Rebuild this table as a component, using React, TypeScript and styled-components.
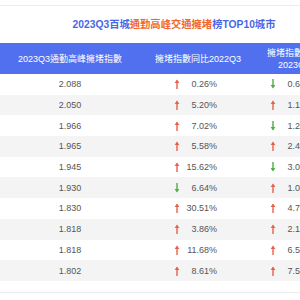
import styled, { createGlobalStyle } from 'styled-components';

const GlobalStyle = createGlobalStyle`
  html, body {
    margin: 0;
    padding: 0;
    background: #fff;
    overflow: hidden;
  }

  body {
    font-family: 'Liberation Sans', 'Noto Sans CJK TC', sans-serif;
  }
`;

const Page = styled.div`
  width: 348px;
`;

const TopRule = styled.div`
  height: 5px;
  border-bottom: 1px solid #ececec;
`;

const Title = styled.h2`
  margin: 0;
  height: 37px;
  line-height: 37px;
  text-align: center;
  font-size: 10.3px;
  font-weight: 700;
  color: #4866e8;

  .hot {
    color: #f2672c;
  }
`;

const Grid = styled.div`
  width: 332px;
  border-bottom: 1px solid #ececec;
  padding-bottom: 11px;
`;

const HeadRow = styled.div`
  display: grid;
  grid-template-columns: 140px 116px 76px;
  height: 31px;
  align-items: center;
  background: #5070f0;
`;

const HeadCell = styled.div`
  padding: 0 6px;
  text-align: center;
  font-size: 9px;
  line-height: 12px;
  color: #fff;
`;

const Row = styled.div<{ $striped: boolean }>`
  display: grid;
  grid-template-columns: 140px 116px 76px;
  height: 20.7px;
  align-items: center;
  background: ${({ $striped }) => ($striped ? '#f4f4f4' : '#fff')};
`;

const Cell = styled.div`
  text-align: center;
  font-size: 9px;
  color: #555;
`;

const ChangeCell = styled.div`
  display: flex;
  justify-content: center;
  align-items: center;
  gap: 5px;
  padding-right: 5px;
  font-size: 9px;
  color: #555;
`;

const Value = styled.span`
  width: 32px;
  text-align: right;
`;

const Arrow = ({ up }: { up: boolean }) => {
  const color = up ? '#e8604c' : '#4fae44';
  return (
    <svg width="6" height="10" viewBox="0 0 6 10" style={{ flex: 'none' }}>
      {up ? (
        <>
          <path d="M3 1.5 V10" stroke={color} strokeWidth="1.4" />
          <path d="M0.6 4 L3 0.4 L5.4 4 Z" fill={color} />
        </>
      ) : (
        <>
          <path d="M3 0 V8.5" stroke={color} strokeWidth="1.4" />
          <path d="M0.6 6 L3 9.6 L5.4 6 Z" fill={color} />
        </>
      )}
    </svg>
  );
};

const rows = [
  { index: '2.088', yoy: '0.26%', yoyUp: true, qoq: '0.63%', qoqUp: false },
  { index: '2.050', yoy: '5.20%', yoyUp: true, qoq: '1.13%', qoqUp: true },
  { index: '1.966', yoy: '7.02%', yoyUp: true, qoq: '1.25%', qoqUp: false },
  { index: '1.965', yoy: '5.58%', yoyUp: true, qoq: '2.47%', qoqUp: true },
  { index: '1.945', yoy: '15.62%', yoyUp: true, qoq: '3.04%', qoqUp: false },
  { index: '1.930', yoy: '6.64%', yoyUp: false, qoq: '1.02%', qoqUp: true },
  { index: '1.830', yoy: '30.51%', yoyUp: true, qoq: '4.71%', qoqUp: true },
  { index: '1.818', yoy: '3.86%', yoyUp: true, qoq: '2.16%', qoqUp: true },
  { index: '1.818', yoy: '11.68%', yoyUp: true, qoq: '6.52%', qoqUp: true },
  { index: '1.802', yoy: '8.61%', yoyUp: true, qoq: '7.54%', qoqUp: true },
];

const App = () => {
  return (
    <Page>
      <GlobalStyle />
      <TopRule />
      <Title>
        2023Q3百城<span className="hot">通勤高峰交通擁堵</span>榜TOP10城市
      </Title>
      <Grid>
        <HeadRow>
          <HeadCell>2023Q3通勤高峰擁堵指數</HeadCell>
          <HeadCell>擁堵指數同比2022Q3</HeadCell>
          <HeadCell>擁堵指數環比2023Q2</HeadCell>
        </HeadRow>
        {rows.map((row, i) => (
          <Row key={i} $striped={i % 2 === 1}>
            <Cell>{row.index}</Cell>
            <ChangeCell>
              <Arrow up={row.yoyUp} />
              <Value>{row.yoy}</Value>
            </ChangeCell>
            <ChangeCell>
              <Arrow up={row.qoqUp} />
              <Value>{row.qoq}</Value>
            </ChangeCell>
          </Row>
        ))}
      </Grid>
    </Page>
  );
};

export default App;
